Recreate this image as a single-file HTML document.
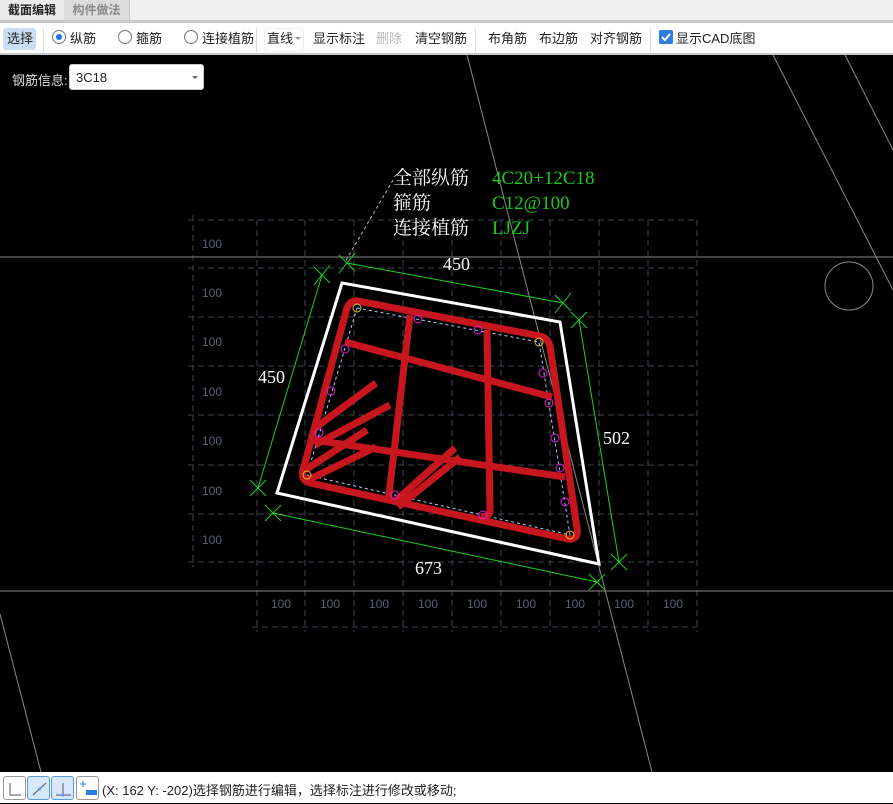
<!DOCTYPE html>
<html><head><meta charset="utf-8"><style>
*{margin:0;padding:0;box-sizing:border-box}
body{width:893px;height:803px;overflow:hidden;background:#000;font-family:"Liberation Sans","Noto Sans CJK SC",sans-serif;font-size:13px;color:#222;position:relative}
.tabs{position:absolute;left:0;top:0;width:893px;height:21px;background:#f0f0f0;border-bottom:1px solid #c8c8c8}
.tab{position:absolute;top:0;height:20px;line-height:20px;font-size:12px;font-weight:bold;text-align:center}
.tb{position:absolute;left:0;top:21px;width:893px;height:34px;background:#fff;border-top:2px solid #c6c9cd;border-bottom:2px solid #c6c9cd}
.it{position:absolute;top:8px;font-size:13px;line-height:16px;white-space:nowrap}
.sep{position:absolute;top:5px;width:1px;height:24px;background:#dcdcdc}
.rad{position:absolute;top:7px;width:14px;height:14px;border:1px solid #777;border-radius:50%;background:#fff}
.status{position:absolute;left:0;top:772px;width:893px;height:31px;background:#fff}
.sb{position:absolute;top:4px;width:23px;height:24px;border:1px solid #999;border-radius:3px;background:#fff}
</style></head><body>
<div class="tabs">
 <div class="tab" style="left:0;width:64px;color:#222;background:#ebebeb">截面编辑</div>
 <div class="tab" style="left:64px;width:66px;color:#888;background:#dcdcdc;border-right:1px solid #c8c8c8">构件做法</div>
</div>
<div class="tb">
 <div style="position:absolute;left:3px;top:5px;width:33px;height:22px;background:#c9def3;border-radius:3px"></div>
 <div class="it" style="left:7px">选择</div>
 <div class="sep" style="left:43px"></div>
 <div class="rad" style="left:52px"><div style="position:absolute;left:3px;top:3px;width:6px;height:6px;border-radius:50%;background:#1a73e8"></div></div>
 <div class="it" style="left:70px">纵筋</div>
 <div class="rad" style="left:118px"></div>
 <div class="it" style="left:136px">箍筋</div>
 <div class="rad" style="left:184px"></div>
 <div class="it" style="left:202px">连接植筋</div>
 <div class="sep" style="left:256px"></div>
 <div style="position:absolute;left:264px;top:5px;width:40px;height:24px;border:1px solid #eee;border-radius:3px"></div>
 <div class="it" style="left:267px">直线</div>
 <div style="position:absolute;left:295px;top:14px;border-left:3px solid transparent;border-right:3px solid transparent;border-top:3px solid #999"></div>
 <div class="it" style="left:313px">显示标注</div>
 <div class="it" style="left:376px;color:#bbb">删除</div>
 <div class="it" style="left:415px">清空钢筋</div>
 <div class="sep" style="left:475px"></div>
 <div class="it" style="left:488px">布角筋</div>
 <div class="it" style="left:539px">布边筋</div>
 <div class="it" style="left:590px">对齐钢筋</div>
 <div class="sep" style="left:650px"></div>
 <div style="position:absolute;left:659px;top:7px;width:14px;height:14px;background:#2b7de0;border-radius:2px"><svg width="14" height="14"><path d="M3 7 L6 10 L11 4" stroke="#fff" stroke-width="2" fill="none"/></svg></div>
 <div class="it" style="left:676px">显示CAD底图</div>
</div>
<div style="position:absolute;left:12px;top:70px;color:#ddd;font-size:13px">钢筋信息:</div>
<div style="position:absolute;left:69px;top:64px;width:135px;height:26px;background:#fff;border-radius:3px;border:1px solid #ccc"><span style="position:absolute;left:6px;top:5px;font-size:13px">3C18</span><div style="position:absolute;left:122px;top:11px;border-left:3px solid transparent;border-right:3px solid transparent;border-top:3px solid #666"></div></div>

<svg style="position:absolute;left:0;top:0" width="893" height="772">
<g stroke="#3e4452" stroke-width="1" stroke-dasharray="6,4" fill="none">
 <line x1="188" y1="220" x2="697" y2="220"/><line x1="188" y1="268" x2="697" y2="268"/><line x1="188" y1="317" x2="697" y2="317"/><line x1="188" y1="366" x2="697" y2="366"/><line x1="188" y1="415" x2="697" y2="415"/><line x1="188" y1="465" x2="697" y2="465"/><line x1="188" y1="514" x2="697" y2="514"/><line x1="188" y1="562" x2="697" y2="562"/>
 <line x1="252" y1="627" x2="697" y2="627"/>
 <line x1="193" y1="215" x2="193" y2="567"/>
 <line x1="257" y1="220" x2="257" y2="632"/><line x1="305" y1="220" x2="305" y2="632"/><line x1="354" y1="220" x2="354" y2="632"/><line x1="403" y1="220" x2="403" y2="632"/><line x1="452" y1="220" x2="452" y2="632"/><line x1="501" y1="220" x2="501" y2="632"/><line x1="550" y1="220" x2="550" y2="632"/><line x1="599" y1="220" x2="599" y2="632"/><line x1="648" y1="220" x2="648" y2="632"/><line x1="697" y1="220" x2="697" y2="632"/>
</g>
<g fill="#5a6172" font-family="Liberation Sans,sans-serif" font-size="12">
 <text x="202" y="248">100</text><text x="202" y="297">100</text><text x="202" y="346">100</text><text x="202" y="396">100</text><text x="202" y="445">100</text><text x="202" y="495">100</text><text x="202" y="544">100</text>
 <text x="271" y="608">100</text><text x="320" y="608">100</text><text x="369" y="608">100</text><text x="418" y="608">100</text><text x="467" y="608">100</text><text x="516" y="608">100</text><text x="565" y="608">100</text><text x="614" y="608">100</text><text x="663" y="608">100</text>
</g>
<g stroke="#888" stroke-width="1" fill="none">
 <line x1="0" y1="257" x2="893" y2="257"/><line x1="0" y1="591" x2="893" y2="591"/>
 <line x1="467" y1="55" x2="652" y2="772"/>
 <line x1="773" y1="55" x2="893" y2="290"/><line x1="845" y1="55" x2="893" y2="150"/>
 <line x1="0" y1="614" x2="41" y2="772"/>
 <circle cx="849" cy="286" r="24"/>
</g>
<line x1="393" y1="180" x2="345" y2="262" stroke="#bbb" stroke-dasharray="3,3"/>
<g font-family="Liberation Serif,'Noto Serif CJK SC',serif" font-size="19">
 <text x="393" y="184" fill="#fff">全部纵筋</text><text x="393" y="209" fill="#fff">箍筋</text><text x="393" y="234" fill="#fff">连接植筋</text>
 <text x="492" y="184" fill="#1ec81e" font-size="19">4C20+12C18</text>
 <text x="492" y="209" fill="#1ec81e" font-size="19">C12@100</text>
 <text x="492" y="234" fill="#1ec81e" font-size="19">LJZJ</text>
</g>
<g stroke="#1ed21e" stroke-width="1" fill="none">
 <line x1="347" y1="263" x2="563" y2="303"/>
 <line x1="322" y1="275" x2="258" y2="488"/>
 <line x1="273" y1="513" x2="597" y2="582"/>
 <line x1="579" y1="320" x2="619" y2="562"/>
 <path d="M339 255l16 16M355 253l-16 20M314 267l16 16M330 265l-16 20M555 295l16 16M571 293l-16 20M571 312l16 16M587 312l-16 16M250 480l16 16M266 480l-16 16M265 505l16 16M281 505l-16 16M589 574l16 16M605 574l-16 16M611 554l16 16M627 554l-16 16"/>
</g>
<g fill="#fff" font-family="Liberation Serif,serif" font-size="18">
 <text x="443" y="270">450</text><text x="258" y="383">450</text><text x="603" y="444">502</text><text x="415" y="574">673</text>
</g>
<polygon points="342,283 560,322 599,564 277,493" fill="none" stroke="#fff" stroke-width="3"/>
<polyline points="357,308 539,342 570,535 307,475 357,308" fill="none" stroke="#b0c8f0" stroke-width="1" stroke-dasharray="3,3"/>
<g stroke="#c8161e" stroke-width="7" fill="none" stroke-linecap="butt" stroke-linejoin="round">
 <path d="M358 301 L540 336 Q548 338 550 346 L577 528 Q579 540 568 539 L310 483 Q300 480 303 470 L347 308 Q350 300 358 301Z"/>
 <line x1="410" y1="315" x2="388" y2="503"/>
 <path d="M487 330 L490 510 Q490 518 481 516"/>
 <line x1="345" y1="342" x2="552" y2="397"/>
 <line x1="313" y1="440" x2="565" y2="477"/>
 <line x1="376" y1="383" x2="315" y2="428"/>
 <line x1="390" y1="405" x2="315" y2="445"/>
 <line x1="367" y1="430" x2="305" y2="470"/>
 <line x1="376" y1="447" x2="308" y2="480"/>
 <line x1="455" y1="448" x2="393" y2="503"/>
 <line x1="460" y1="457" x2="398" y2="507"/>
</g>
<g fill="none" stroke-width="1">
 <g stroke="#e8c020"><circle cx="357" cy="308" r="4"/><circle cx="539" cy="342" r="4"/><circle cx="570" cy="535" r="4"/><circle cx="307" cy="475" r="4"/></g>
 <g stroke="#e020e0"><circle cx="418" cy="319" r="4"/><circle cx="478" cy="330" r="4"/><circle cx="345" cy="349" r="4"/><circle cx="331" cy="391" r="4"/><circle cx="319" cy="433" r="4"/><circle cx="543" cy="373" r="4"/><circle cx="549" cy="403" r="4"/><circle cx="555" cy="438" r="4"/><circle cx="560" cy="468" r="4"/><circle cx="565" cy="502" r="4"/><circle cx="395" cy="495" r="4"/><circle cx="483" cy="515" r="4"/></g>
</g>
</svg>

<div class="status">
 <div class="sb" style="left:3px"><svg width="23" height="24"><path d="M6 6V18H17" stroke="#555" fill="none"/></svg></div>
 <div class="sb" style="left:27px;background:#d6e8fb;border-color:#5a9be0"><svg width="23" height="24"><path d="M5 18L18 6" stroke="#555" fill="none"/><circle cx="11.5" cy="12" r="1.5" fill="#5a9be0"/></svg></div>
 <div class="sb" style="left:51px;background:#d6e8fb;border-color:#5a9be0"><svg width="23" height="24"><path d="M11 6V18M4 18H19" stroke="#555" fill="none"/><circle cx="11" cy="18" r="1.5" fill="#5a9be0"/></svg></div>
 <div class="sb" style="left:76px"><svg width="23" height="24"><path d="M3 7H9M6 4V10" stroke="#2b7de0" fill="none"/><rect x="9" y="13" width="11" height="5" fill="#2b7de0"/></svg></div>
 <div style="position:absolute;left:102px;top:8px;font-size:13px;color:#222;white-space:nowrap">(X: 162 Y: -202)选择钢筋进行编辑，选择标注进行修改或移动;</div>
</div>
</body></html>
